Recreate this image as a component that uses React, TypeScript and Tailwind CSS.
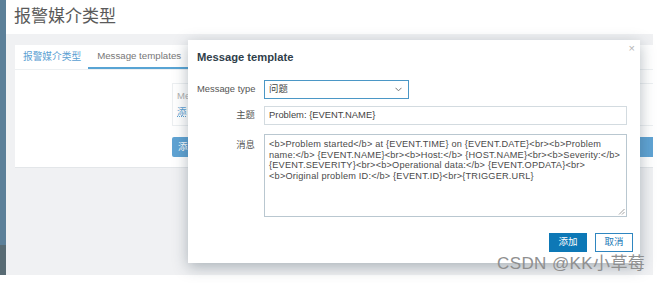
import React from 'react';

const lines = [
    '<b>Problem started</b> at {EVENT.TIME} on {EVENT.DATE}<br><b>Problem',
    'name:</b> {EVENT.NAME}<br><b>Host:</b> {HOST.NAME}<br><b>Severity:</b>',
    '{EVENT.SEVERITY}<br><b>Operational data:</b> {EVENT.OPDATA}<br>',
    '<b>Original problem ID:</b> {EVENT.ID}<br>{TRIGGER.URL}',
];

function Label({text, className = ''}: { text: string, className?: string }) {
    return (
        <div className={`w-[58px] shrink-0 whitespace-nowrap text-right text-[9.4px] text-[#555] ${className}`}>{text}</div>
    )
}

export default function App() {
    return (
        <div className="relative w-[669px] h-[283px] overflow-hidden bg-white font-['Liberation_Sans','Noto_Sans_CJK_SC',sans-serif]">
            <div className="flex w-[653px] h-[275px]">
                {/* sidebar edge */}
                <div className="w-[6px] flex flex-col">
                    <div className="flex-1 bg-[#5c8099]"/>
                    <div className="h-[30px] bg-[#586b74]"/>
                </div>

                <div className="flex-1 flex flex-col bg-[#f0f1f3]">
                    <div className="h-[34px] bg-white pl-[8px] flex items-center text-[17px] text-[#5a5a5a]">报警媒介类型</div>

                    <div className="ml-[9px] mt-[11px] h-[123px] bg-white border-b border-[#e3e6e9]">
                        <div className="flex h-[25px] border-b border-[#edf0f2] text-[9.7px] whitespace-nowrap">
                            <div className="pl-[8px] pr-[7px] flex items-center text-[#5aa0d2]">报警媒介类型</div>
                            <div className="px-[9px] flex items-center text-[#777] border-b-2 border-[#58a4d4]">Message templates</div>
                        </div>
                        <div className="pl-[157px] pt-[13px]">
                            <div className="h-[43px] border border-[#eceff1] border-r-0 pl-[4px] pt-[4px] text-[9.5px] leading-[16px]">
                                <div className="text-[#b0b0b0]">Me</div>
                                <div className="text-[#5aa0d2] underline decoration-dotted">添</div>
                            </div>
                            <div className="mt-[11px] h-[20px] bg-[#5fa3d3] rounded-l-[2px] text-white text-[9.5px] pl-[6px] flex items-center">添</div>
                        </div>
                    </div>
                </div>
            </div>

            {/* dialog */}
            <div className="absolute left-[188px] top-[40px] w-[452px] h-[223px] bg-white shadow-[0_4px_14px_rgba(40,60,75,0.35)]">
                <div className="absolute right-[5px] top-[3px] text-[11px] leading-none text-[#b5b5b5]">×</div>
                <div className="pl-[9px] pt-[10px] h-[24px] leading-[14px] text-[11.2px] font-bold text-[#2f3e4a]">Message template</div>

                <div className="mt-[16px] flex items-center pl-[9px] gap-[9px]">
                    <Label text="Message type"/>
                    <div className="w-[145px] h-[19px] border border-[#4b97c6] flex items-center justify-between pl-[4px] pr-[6px] text-[9.4px] text-[#444]">
                        <span>问题</span>
                        <svg width="7" height="5" viewBox="0 0 7 5">
                            <polyline points="0.5,0.8 3.5,3.8 6.5,0.8" fill="none" stroke="#777" strokeWidth="1"/>
                        </svg>
                    </div>
                </div>

                <div className="mt-[7px] flex items-center pl-[9px] gap-[9px]">
                    <Label text="主题"/>
                    <div className="w-[363px] h-[19px] border border-[#d3dbe0] flex items-center pl-[4px] text-[9.4px] text-[#444]">Problem: {'{EVENT.NAME}'}</div>
                </div>

                <div className="mt-[9px] flex items-start pl-[9px] gap-[9px]">
                    <Label text="消息" className="pt-[4px]"/>
                    <div className="relative w-[363px] h-[83px] border border-[#b9c7d0] pl-[4px] pt-[4px] text-[9.2px] leading-[10.7px] tracking-[0.2px] text-[#4a4a4a]">
                        {lines.map((l, i) => <div key={i} className="whitespace-nowrap">{l}</div>)}
                        <svg className="absolute right-[1px] bottom-[1px]" width="7" height="7" viewBox="0 0 7 7">
                            <line x1="1" y1="6.5" x2="6.5" y2="1" stroke="#888" strokeWidth="0.8"/>
                            <line x1="4" y1="6.5" x2="6.5" y2="4" stroke="#888" strokeWidth="0.8"/>
                        </svg>
                    </div>
                </div>

                <div className="mt-[16px] flex justify-end gap-[8px] pr-[7px]">
                    <div className="w-[38px] h-[19px] bg-[#0d78b6] text-white text-[9.5px] flex items-center justify-center">添加</div>
                    <div className="w-[38px] h-[19px] border border-[#2f86c0] bg-white text-[#2178b6] text-[9.5px] flex items-center justify-center">取消</div>
                </div>
            </div>

            {/* watermark */}
            <div className="absolute left-[497px] top-[255px] text-[17px] leading-[18px] whitespace-nowrap text-[#8f8f8f] tracking-[0.4px]">CSDN @KK小草莓</div>
        </div>
    )
}
